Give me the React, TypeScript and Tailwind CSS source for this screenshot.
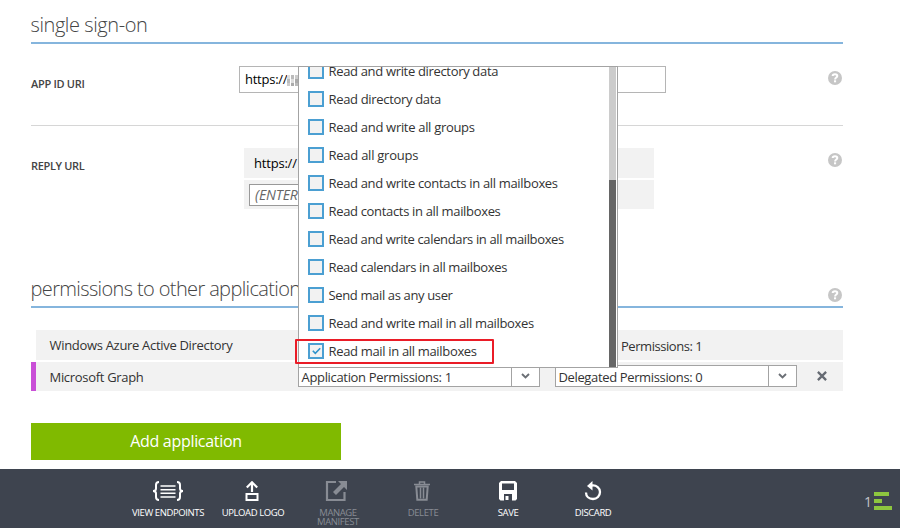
import type { ReactNode } from 'react';

const permissions = [
  { label: 'Read and write directory data', spacing: 'tracking-[-0.33px]' },
  { label: 'Read directory data', spacing: 'tracking-[-0.33px]' },
  { label: 'Read and write all groups', spacing: 'tracking-[-0.31px]' },
  { label: 'Read all groups', spacing: 'tracking-[-0.25px]' },
  { label: 'Read and write contacts in all mailboxes', spacing: 'tracking-[-0.33px]' },
  { label: 'Read contacts in all mailboxes', spacing: 'tracking-[-0.33px]' },
  { label: 'Read and write calendars in all mailboxes', spacing: 'tracking-[-0.36px]' },
  { label: 'Read calendars in all mailboxes', spacing: 'tracking-[-0.36px]' },
  { label: 'Send mail as any user', spacing: 'tracking-[-0.36px]' },
  { label: 'Read and write mail in all mailboxes', spacing: 'tracking-[-0.33px]' },
  { label: 'Read mail in all mailboxes', spacing: 'tracking-[-0.33px]', checked: true },
];

function Help() {
  return (
    <svg className="block h-[14px] w-[14px] shrink-0" viewBox="0 0 14 14">
      <circle cx="7" cy="7" r="7" fill="#c6c6c6" />
      <path d="M4.7 5.100C4.700 3.800 5.700 3.300 7 3.300s2.300.6 2.300 1.800C9.300 6.600 7.100 6.500 7.100 8.400" fill="none" stroke="#fff" strokeWidth="2" />
      <rect x="6" y="9.300" width="2.100" height="2" fill="#fff" />
    </svg>
  );
}

function Arrow() {
  return (
    <span className="flex h-full w-[28px] items-center justify-center border-l border-[#a3a3a3]">
      <svg className="block h-[6px] w-[9px]" viewBox="0 0 9 6">
        <path d="M1 1l3.5 3.5L8 1" fill="none" stroke="#6b6f75" strokeWidth="1.9" />
      </svg>
    </span>
  );
}

function PermissionMenu() {
  return (
    <div className="absolute -left-px top-[-300px] z-10 h-[302px] w-[320px] border border-[#a3a3a3] bg-white">
      <div className="flex h-full overflow-hidden">
        <div className="-mt-[10px] flex-1">
          {permissions.map((p) => (
            <div key={p.label} className="flex h-7 items-center gap-[4.500px] pl-[9px]">
              <span className="flex h-4 w-4 shrink-0 items-center justify-center border-2 border-[#4b9fd2] bg-[#f2f2f2]">
                {p.checked && (
                  <svg className="block h-[8px] w-[9px]" viewBox="0 0 9 8">
                    <path d="M.8 3.8l2.5 2.5L8.2 1.2" fill="none" stroke="#2f92cb" strokeWidth="1.6" />
                  </svg>
                )}
              </span>
              <span className={`whitespace-nowrap text-[13px] leading-5 text-[#333] ${p.spacing}`}>{p.label}</span>
            </div>
          ))}
        </div>
        <div className="mr-px w-[7px] bg-[#ccc]">
          <div className="mt-[113px] h-[187px] bg-[#666]" />
        </div>
      </div>
      <div className="absolute left-[-4px] top-[272px] h-[25px] w-[199px] rounded-[1px] border-2 border-[#ea1c27]" />
    </div>
  );
}

function Action({ label, children, dim = false, width }: { label: ReactNode; children: ReactNode; dim?: boolean; width: string }) {
  return (
    <div className={`flex shrink-0 flex-col items-center ${width} ${dim ? 'text-[#888c94]' : 'text-white'}`}>
      <div className="flex h-[24px] items-center justify-center">{children}</div>
      <div className="mt-[5px] whitespace-nowrap text-center text-[9.5px] leading-[9px] tracking-[-0.4px]">{label}</div>
    </div>
  );
}

export default function App() {
  return (
    <div className="flex h-[528px] w-[900px] flex-col overflow-hidden bg-white font-['Open_Sans','Noto_Sans',sans-serif] text-[#333]">
      <main className="flex h-[469px] shrink-0 flex-col pl-[31px] pr-[57px]">
        <h2 className="flex h-[44px] items-end border-b-2 border-[#85b5dd] pb-[3px] text-[20px] font-light leading-[28px] tracking-[-0.42px] text-[#444]"><span className="-ml-[0.5px]">single sign-on</span></h2>

        <section className="flex h-[82px] items-start border-b border-[#d6d6d6]">
          <div className="mt-[33px] w-[208px] text-[11px] font-semibold leading-[14px] tracking-[-0.3px] text-[#444]">APP ID URI</div>
          <div className="mt-[22px] flex h-[27px] w-[427px] items-center border border-[#b5b5b5] pl-[5px] pt-px text-[13px] tracking-[-0.25px] text-black">
            https://
            <span className="grid grid-cols-4">
              <i className="h-[4px] w-[3px] bg-[#ddd]" />
              <i className="h-[4px] w-[3px] bg-[#bbb]" />
              <i className="h-[4px] w-[3px] bg-[#ccc]" />
              <i className="h-[4px] w-[4px] bg-[#aaa]" />
              <i className="h-[4px] w-[3px] bg-[#bbb]" />
              <i className="h-[4px] w-[3px] bg-[#ddd]" />
              <i className="h-[4px] w-[3px] bg-[#aaa]" />
              <i className="h-[4px] w-[4px] bg-[#888]" />
              <i className="h-[3px] w-[3px] bg-[#ccc]" />
              <i className="h-[3px] w-[3px] bg-[#aaa]" />
              <i className="h-[3px] w-[3px] bg-[#bbb]" />
              <i className="h-[3px] w-[4px] bg-[#aaa]" />
            </span>
          </div>
          <div className="ml-auto mr-px mt-[27px]"><Help /></div>
        </section>

        <section className="flex h-[150px] items-start">
          <div className="mt-[33px] w-[213px] text-[11px] font-semibold leading-[14px] tracking-[-0.35px] text-[#444]">REPLY URL</div>
          <div className="mt-[22px] flex w-[410px] flex-col gap-[2px]">
            <div className="flex h-[30px] items-center bg-[#f2f2f2] pl-[10px] pt-px text-[13px] tracking-[-0.2px] text-black">https://</div>
            <div className="h-[29px] bg-[#f2f2f2] pl-[5px] pt-[4px]">
              <div className="flex h-[22px] w-[360px] items-center whitespace-nowrap border border-[#999] bg-white pl-[5px] text-[14px] italic leading-5 tracking-[-0.1px] text-[#666]">(ENTER A REPLY URL)</div>
            </div>
          </div>
          <div className="ml-auto mr-px mt-[27px]"><Help /></div>
        </section>

        <div className="flex h-[32px] items-start justify-between border-b-2 border-[#85b5dd]">
          <h2 className="-ml-[0.5px] -mt-px text-[20px] font-light leading-[28px] tracking-[-0.63px] text-[#444]">permissions to other applications</h2>
          <div className="mr-px mt-[12px]"><Help /></div>
        </div>

        <div className="mt-[22px] flex flex-col gap-[2px] text-[13px] tracking-[-0.31px]">
          <div className="ml-[5px] flex h-[30px] items-center bg-[#f2f2f2] pl-[13.5px]">
            <span className="w-[507.5px] pt-[2px]">Windows Azure Active Directory</span>
            <span className="whitespace-nowrap pt-[3px] tracking-[-0.45px]"><span className="inline-block w-[64px]">Delegated</span>Permissions: 1</span>
          </div>
          <div className="flex h-[29px] items-start border-l-[5px] border-[#c94fd7] bg-[#f2f2f2] pl-[13.5px]">
            <span className="w-[248.5px] pt-[5px] leading-5">Microsoft Graph</span>
            <div className="relative mt-[3px] flex h-[22px] w-[242px] items-center justify-between border border-[#a3a3a3] bg-white pl-[2.500px]">
              <span className="pt-[3px] tracking-[-0.33px]">Application Permissions: 1</span>
              <Arrow />
              <PermissionMenu />
            </div>
            <div className="ml-[15px] mt-[3px] flex h-[22px] w-[242px] items-center justify-between border border-[#a3a3a3] bg-white pl-[2.500px]">
              <span className="pt-[3px] tracking-[-0.36px]">Delegated Permissions: 0</span>
              <Arrow />
            </div>
            <svg className="ml-[20px] mt-[9px] block h-[10px] w-[10px]" viewBox="0 0 10 10">
              <path d="M.9.9l8.2 8.2M9.1.9L.9 9.1" stroke="#666b73" strokeWidth="2.3" />
            </svg>
          </div>
        </div>

        <button className="mt-[32px] h-[37px] w-[310px] bg-[#80ba00] text-[16px] leading-[37px] tracking-[-0.3px] text-white">Add application</button>
      </main>

      <footer className="flex h-[59px] shrink-0 items-start bg-[#3e444f] pl-[125px] pt-[10px]">
        <Action label="VIEW ENDPOINTS" width="w-[86px]">
          <svg className="block h-[20px] w-[32px]" viewBox="0 0 32 20" fill="none" stroke="currentColor">
            <path d="M7 1C4.5 1 4 2 4 4v3.500C4 9 3 10 1 10c2 0 3 1 3 2.500V16c0 2 .5 3 3 3M25 1c2.500 0 3 1 3 3v3.500c0 1.500 1 2.500 3 2.500-2 0-3 1-3 2.500V16c0 2-.5 3-3 3" strokeWidth="2" />
            <path d="M8.500 5h15M8.500 8.700h15M8.500 12.300h15M8.500 16h15" strokeWidth="1.400" />
          </svg>
        </Action>
        <Action label="UPLOAD LOGO" width="w-[84px]">
          <svg className="mr-[3px] block h-[20px] w-[14px]" viewBox="0 0 14 20" fill="none" stroke="currentColor">
            <path d="M7 11V2M1.800 6.500L7 1.300l5.200 5.200" strokeWidth="2.200" />
            <path d="M1.500 13h11v6h-11z" strokeWidth="2" />
          </svg>
        </Action>
        <Action label={<>MANAGE<br />MANIFEST</>} width="w-[86px]" dim>
          <svg className="mr-[5px] block h-[20px] w-[22px]" viewBox="0 0 22 20">
            <path d="M11 1H2v18h17.500v-8" fill="none" stroke="currentColor" strokeWidth="2.200" />
            <path d="M13 0h9v9l-3-3-8 8-3-3 8-8z" fill="currentColor" />
          </svg>
        </Action>
        <Action label="DELETE" width="w-[84px]" dim>
          <svg className="mr-[2px] block h-[20px] w-[16px]" viewBox="0 0 16 20" fill="none" stroke="currentColor">
            <path d="M0 3.500h16M5.500 3V1h5v2" strokeWidth="1.500" />
            <path d="M2.300 5.500l1 13.300h9.400l1-13.300z" strokeWidth="2" />
            <path d="M6.500 6.500v11M9.500 6.500v11" strokeWidth="1.500" />
          </svg>
        </Action>
        <Action label="SAVE" width="w-[86px]">
          <svg className="block h-[20px] w-[18px]" viewBox="0 0 18 20">
            <path fillRule="evenodd" d="M2 0h14l2 2v16l-1.500 1.500h-15L0 18V2zM3 2.500v6.500h12V2.500zM5 13v6.500h8V13z" fill="currentColor" />
            <path d="M6.500 15h3v4h-3z" fill="currentColor" />
          </svg>
        </Action>
        <Action label="DISCARD" width="w-[84px]">
          <svg className="block h-[20px] w-[18px]" viewBox="0 0 18 20">
            <path d="M8 4.500c4.500-.5 8 2.500 8 6.500 0 4-3 7-7 7s-7-2.500-7-6.500" fill="none" stroke="currentColor" strokeWidth="2.300" />
            <path d="M3 5L8.500 0v9.500z" fill="currentColor" />
          </svg>
        </Action>
        <div className="ml-auto mr-[8px] mt-[13px] flex items-start gap-[2px]">
          <span className="pt-px text-[14px] leading-[18px] text-[#c3c5c8]">1</span>
          <div className="flex w-[18px] flex-col gap-[3px]">
            <i className="h-[4px] w-[15px] bg-[#8dc63f]" />
            <i className="h-[4px] w-[8px] bg-[#8dc63f]" />
            <i className="h-[4px] w-[18px] bg-[#8dc63f]" />
          </div>
        </div>
      </footer>
    </div>
  );
}
